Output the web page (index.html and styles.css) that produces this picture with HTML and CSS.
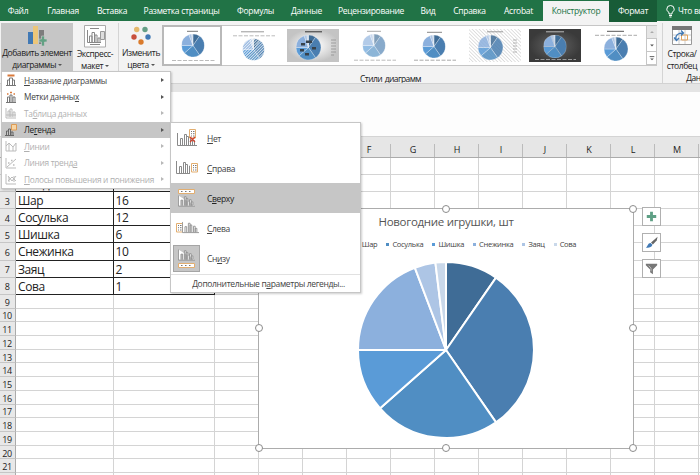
FILE: index.html
```html
<!DOCTYPE html>
<html lang="ru">
<head>
    <meta charset="UTF-8">
    <meta name="viewport" content="width=device-width, initial-scale=1.0">
    <title>Новогодние игрушки</title>
    <link rel="stylesheet" href="styles.css">
</head>
<body>

<!-- Общие рисунки -->
<svg class="defs">
    <symbol id="pie" viewBox="-88 -88 176 176">
        <g stroke="#fff" stroke-width="2" stroke-linejoin="round">
            <path fill="#3f6c96" d="M0 0V-88A88 88 0 0 1 50-72.4Z"/>
            <path fill="#4a7eb0" d="M0 0L50-72.4A88 88 0 0 1 50 72.4Z"/>
            <path fill="#508ec3" d="M0 0L50 72.4A88 88 0 0 1-65.9 58.3Z"/>
            <path fill="#5a9bd7" d="M0 0L-65.9 58.3A88 88 0 0 1-88 0Z"/>
            <path fill="#8cb0dd" d="M0 0H-88A88 88 0 0 1-31.2-82.3Z"/>
            <path fill="#adc5e5" d="M0 0L-31.2-82.3A88 88 0 0 1-10.6-87.4Z"/>
            <path fill="#c9d8ea" d="M0 0L-10.6-87.4A88 88 0 0 1 0-88Z"/>
        </g>
    </symbol>
    <symbol id="bars" viewBox="0 0 20 13">
        <path d="M.5 0V12.5H20M3.500 12V5.500h2V12M7.500 12V1.500h2V12M9.500 12V3.500h2V12M13.500 12V5h2v7M15.500 12V7.500h2V12" fill="#fff" stroke="#8a8a8a"/>
    </symbol>
    <symbol id="legend-v" viewBox="0 0 7 10">
        <path d="M.5.500h6v8.500h-6z" fill="#fff" stroke="#e2ae70"/>
        <path d="M2 2.500h1M2 4.700h1M2 7h1M4 2.500h1.500M4 4.700h1.500M4 7h1.500" stroke="#777"/>
    </symbol>
    <symbol id="legend-h" viewBox="0 0 17 5">
        <path d="M.5.500h16v4H.5z" fill="#fff" stroke="#e2ae70"/>
        <path d="M3 2.500h1.500M7 2.500h1.500M11 2.500h1.500" stroke="#777"/>
    </symbol>
    <pattern id="stripes" width="2" height="2" patternUnits="userSpaceOnUse" patternTransform="rotate(-45)">
        <path d="M0 0H2" stroke="#fff" stroke-width="1.500"/>
    </pattern>
    <pattern id="hatch" width="2.500" height="2.500" patternUnits="userSpaceOnUse" patternTransform="rotate(45)">
        <path d="M0 0H2.500" stroke="#bbb" stroke-width=".9"/>
    </pattern>
    <radialGradient id="silver"><stop offset=".3" stop-color="#f2f2f2"/><stop offset="1" stop-color="#c4c4c4"/></radialGradient>
    <radialGradient id="dark"><stop offset=".2" stop-color="#5c5c5c"/><stop offset="1" stop-color="#3a3a3a"/></radialGradient>
</svg>

<!-- Вкладки -->
<nav class="tabs">
    <span>Файл</span>
    <span>Главная</span>
    <span>Вставка</span>
    <span>Разметка страницы</span>
    <span>Формулы</span>
    <span>Данные</span>
    <span>Рецензирование</span>
    <span>Вид</span>
    <span>Справка</span>
    <span>Acrobat</span>
    <span class="active">Конструктор</span>
    <span class="context">Формат</span>
    <span class="ask"><svg width="9" height="13" viewBox="0 0 9 13" fill="none" stroke="#fff"><path d="M3 9V7.500C1.500 6.500.8 5.500.8 4.200a3.700 3.700 0 0 1 7.400 0C8.200 5.500 7.500 6.500 6 7.500V9zM3 10.500h3M3.500 12h2"/></svg>Что вы</span>
</nav>

<!-- Лента -->
<div class="ribbon">
    <div class="tool tool-add">
        <svg width="20" height="20" viewBox="0 0 20 20"><path d="M1 6h5v12H1z" fill="#4179b5"/><path d="M6 0h5v18H6z" fill="#ecc679"/><path d="M12 4h5v14h-5z" fill="#7d7d7d"/><path d="M14.500 10h3v3H20v3h-2.500v4h-3v-4H12v-3h2.500z" fill="#62a183" stroke="#c6c6c6" stroke-width=".7"/></svg>
        <p>Добавить элемент<br>диаграммы <i class="caret"></i></p>
    </div>
    <div class="tool tool-express">
        <svg width="22" height="23" viewBox="0 0 22 23"><path d="M.5.500h21v21.500H.5z" fill="#fff" stroke="#aaa"/><path d="M6 3.500h9M6 19.500h10" stroke="#888"/><path d="M3.500 5v12.500H17M5.500 17v-6H8v6M8 17V7.500h2.500V17M11 17v-7h2v7M14 17v-4h2v4" fill="none" stroke="#888"/><path d="M16.500 6.500h4v8h-4z" fill="#ddd" stroke="#999"/></svg>
        <p>Экспресс-<br>макет <i class="caret"></i></p>
    </div>
    <div class="tool tool-colors">
        <svg width="20" height="20" viewBox="0 0 20 20"><circle cx="5.700" cy="3.500" r="2.700" fill="#e5b86c"/><circle cx="14" cy="3.500" r="2.700" fill="#659f86"/><circle cx="3" cy="11" r="2.700" fill="#c8503c"/><circle cx="17" cy="11" r="2.700" fill="#4179b5"/><circle cx="10" cy="16" r="2.700" fill="#da7b2c"/></svg>
        <p>Изменить<br>цвета <i class="caret"></i></p>
    </div>
    <div class="styles">
        <div class="gallery">
            <svg class="selected" viewBox="0 0 60 41"><path d="M25 6.300h11" stroke="#777"/><use href="#pie" x="19.500" y="9" width="23" height="23"/><path d="M10 35.500h43" stroke="#bbb" stroke-dasharray="4 1.500"/></svg>
            <svg viewBox="0 0 60 41"><path d="M18 6.800h23" stroke="#999"/><path d="M10 10.800h42" stroke="#bbb" stroke-dasharray="4 1.500"/><use href="#pie" x="19.500" y="13.500" width="22" height="22"/><circle cx="30.500" cy="24.500" r="11.500" fill="url(#stripes)"/></svg>
            <svg viewBox="0 0 60 41"><path d="M4 4h52v33H4z" fill="url(#silver)"/><path d="M22 6.800h17" stroke="#333"/><use href="#pie" x="13" y="10" width="25" height="25"/><g fill="#38424b"><path d="M18 18h4v2.500h-4zM23 15.500h6v2.500h-6zM29 22h4v2.500h-4zM17 24h4v2.500h-4zM22 28h4v2.500h-4z"/></g><path d="M48 15h5M48 18h5M48 21h5M48 24h5M48 27h5M48 30h3" stroke="#888" stroke-width=".7"/></svg>
            <svg viewBox="0 0 60 41"><path d="M23 6.300h14" stroke="#aaa"/><use href="#pie" x="18.500" y="9" width="23" height="23" opacity=".65"/><path d="M10 35.200h42" stroke="#bbb" stroke-dasharray="4 1.500"/></svg>
            <svg viewBox="0 0 60 41"><path d="M23 7.300h15" stroke="#888"/><use href="#pie" x="18.500" y="10" width="23" height="23"/><path d="M10 35.200h42" stroke="#aaa" stroke-dasharray="4 1.500"/></svg>
            <svg viewBox="0 0 60 41"><path d="M4 4h52v33H4z" fill="url(#hatch)"/><path d="M22 6.800h16" stroke="#999"/><use href="#pie" x="13" y="10" width="25" height="25" opacity=".85"/><path d="M48 15h4M48 18h4M48 21h4M48 24h4M48 27h4" stroke="#999" stroke-width=".7"/></svg>
            <svg viewBox="0 0 60 41"><path d="M4 4h52v33H4z" fill="url(#dark)"/><path d="M21 6.800h18" stroke="#bbb"/><use href="#pie" x="18.500" y="10" width="23" height="23"/><path d="M10 34.500h41" stroke="#999" stroke-dasharray="4 1.500"/></svg>
            <svg viewBox="0 0 60 41"><path d="M21 6.300h17" stroke="#555"/><path d="M9 10.300h42" stroke="#aaa" stroke-dasharray="4 1.500"/><use href="#pie" x="18" y="12" width="24" height="24"/></svg>
            <div class="scroll">
                <svg class="off" viewBox="0 0 10 13"><path d="M3 7.500l2-2 2 2z" fill="#aaa"/></svg>
                <svg viewBox="0 0 10 13"><path d="M3 6h4L5 8z" fill="#555"/></svg>
                <svg viewBox="0 0 10 13"><path d="M3 7h4L5 9z" fill="#555"/><path d="M2.500 5h5" stroke="#555"/></svg>
            </div>
        </div>
        <div class="caption">Стили диаграмм</div>
    </div>
    <div class="tool tool-data">
        <svg width="20" height="19" viewBox="0 0 20 19"><path d="M.5.500h19v18H.5z" fill="#fff" stroke="#999"/><path d="M0 0h20v4H0z" fill="#777"/><path d="M1 9h18M1 14h18M7 4v14M13 4v14" stroke="#ccc"/><path d="M9.500 9h6v5h-6z" fill="none" stroke="#e5a45c"/><path d="M4 14c-1-5 2-7 7-7M9 4.500L11.500 7 9 9.500M2 11.500L4.500 14.500 7 12" fill="none" stroke="#4179b5" stroke-width="1.300"/></svg>
        <p>Строка/<br>столбец</p>
        <div class="caption">Дан</div>
    </div>
</div>

<div class="formula-bar"></div>

<!-- Лист: ячейки заполняет скрипт -->
<div class="sheet" id="sheet"></div>

<!-- Диаграмма -->
<div class="chart">
    <h1>Новогодние игрушки, шт</h1>
    <ul class="legend">
        <li class="c2">Шар</li>
        <li class="c3">Сосулька</li>
        <li class="c4">Шишка</li>
        <li class="c5">Снежинка</li>
        <li class="c6">Заяц</li>
        <li class="c7">Сова</li>
    </ul>
    <svg class="pie"><use href="#pie"/></svg>
    <i class="handle n"></i>
    <i class="handle ne"></i>
    <i class="handle e"></i>
    <i class="handle se"></i>
    <i class="handle s"></i>
    <i class="handle sw"></i>
    <i class="handle w"></i>
</div>
<div class="chart-buttons">
    <button><svg viewBox="0 0 18 18"><path d="M7.500 4h3v3.500h3.500v3h-3.500v3.500h-3v-3.500H4v-3h3.500z" fill="#5fa085"/></svg></button>
    <button><svg viewBox="0 0 18 18"><path d="M15.500 3l-1 4-4 4-2-2z" fill="#666"/><path d="M8 9.500l2 2c-1 3-4 3.500-7 3 2-1 2-5 5-5z" fill="#4179b5"/></svg></button>
    <button><svg viewBox="0 0 18 18"><path d="M3 4h12v1.500L10.500 10v5L7.500 13v-3L3 5.500z" fill="#777"/><path d="M6 6l2.500 2.500V12" stroke="#ddd" fill="none" stroke-width=".7"/></svg></button>
</div>

<!-- Меню "Добавить элемент диаграммы" -->
<ul class="menu">
    <li><svg viewBox="0 0 12 12"><path d="M2.500 1.500h7" stroke="#d9793a" stroke-width="2"/><path d="M2.500 11V6h2v5M4.500 11V4h3v7M7.500 11V6h2v5M1 11.500h10" fill="none" stroke="#777"/></svg><span><u>Н</u>азвание диаграммы</span></li>
    <li><svg viewBox="0 0 12 12"><path d="M2 3h1.500M5 1.500h2M8.500 3H10" stroke="#d9793a" stroke-width="1.500"/><path d="M2.500 11V6h2v5M5 11V4h2v7M8 11V6h2v5M1 11.500h10" fill="none" stroke="#777"/></svg><span>Метки данны<u>х</u></span></li>
    <li class="disabled"><svg viewBox="0 0 12 12"><path d="M1 1v10h10M3 10V4h2v6M5 10V2h2v8M8 10V5h2v5M1 8h10" fill="none" stroke="#bbb"/></svg><span>Та<u>б</u>лица данных</span></li>
    <li class="hover"><svg viewBox="0 0 12 12"><path d="M6.500.500h5v5.500h-5z" fill="#f7d5a5" stroke="#dd9b54"/><path d="M1.500 11V7h2v4M3.500 11V5h2v6M6 11V8h2v3M0 11.500h9" fill="none" stroke="#666"/></svg><span>Ле<u>г</u>енда</span></li>
    <li class="disabled"><svg viewBox="0 0 12 12"><path d="M1 1v10h10M1 6l3-3 4 4 3-4M4 3v8M8 7v4M11 3v8" fill="none" stroke="#bbb"/></svg><span><u>Л</u>инии</span></li>
    <li class="disabled"><svg viewBox="0 0 12 12"><path d="M1 1v10h10M2 10l9-8" fill="none" stroke="#bbb"/><path d="M3 6h1.500M6 3.500h1.500M8 8h1.500" stroke="#bbb" stroke-width="1.500"/></svg><span>Линия тренд<u>а</u></span></li>
    <li class="disabled"><svg viewBox="0 0 12 12"><path d="M1 1v10h10M3 3l4 5 4-5M3 8l4-4 4 4M4 4v5M9 3v6" fill="none" stroke="#bbb"/></svg><span><u>П</u>олосы повышения и понижения</span></li>
</ul>

<!-- Подменю "Легенда" -->
<div class="submenu">
    <ul>
        <li><svg viewBox="0 0 27 27"><use href="#bars" x="4" y="8" width="20" height="13"/><use href="#legend-v" x="16" y="4" width="7" height="10"/><path d="M17 12l5 5M22 12l-5 5" stroke="#d0442f" stroke-width="1.300"/></svg><span><u>Н</u>ет</span></li>
        <li><svg viewBox="0 0 27 27"><use href="#bars" x="3" y="6" width="20" height="13"/><path d="M17 6h9v14h-9z" fill="#fff"/><use href="#legend-v" x="18" y="8" width="7" height="10"/></svg><span><u>С</u>права</span></li>
        <li class="hover"><svg viewBox="0 0 27 27"><use href="#legend-h" x="5" y="4" width="17" height="5"/><use href="#bars" x="5" y="10" width="17" height="12"/></svg><span>С<u>в</u>ерху</span></li>
        <li><svg viewBox="0 0 27 27"><use href="#legend-v" x="3" y="8" width="7" height="10"/><use href="#bars" x="9" y="6" width="17" height="13"/></svg><span><u>С</u>лева</span></li>
        <li><svg class="checked" viewBox="0 0 27 27"><use href="#bars" x="5" y="4" width="17" height="12"/><use href="#legend-h" x="5" y="18" width="17" height="5"/></svg><span>Сн<u>и</u>зу</span></li>
    </ul>
    <div class="more">Дополнительные п<u>а</u>раметры легенды...</div>
</div>

<script>
    const columns = ['A', 'B', 'C', 'D', 'E', 'F', 'G', 'H', 'I', 'J', 'K', 'L', 'M', ''];
    const data = {
        2: ['Звезда', 5],
        3: ['Шар', 16],
        4: ['Сосулька', 12],
        5: ['Шишка', 6],
        6: ['Снежинка', 10],
        7: ['Заяц', 2],
        8: ['Сова', 1]
    };
    const sheet = document.getElementById('sheet');

    function addCell(text, className) {
        const cell = document.createElement('div');
        cell.textContent = text;
        cell.className = className;
        sheet.appendChild(cell);
    }

    addCell('', 'head');
    columns.forEach(name => addCell(name, 'head'));

    for (let row = 1; row <= 22; row++) {
        addCell(row < 22 ? row : '', 'row-number');
        columns.forEach((name, i) => {
            const value = data[row] && data[row][i];
            addCell(value || '', value ? 'cell filled' : 'cell');
        });
    }
</script>

</body>
</html>
```
FILE: styles.css
```css
* {
    box-sizing: border-box;
}
body {
    position: relative;
    width: 700px;
    height: 475px;
    margin: 0;
    overflow: hidden;
    background: #fff;
    font-family: "Open Sans", "Noto Sans", sans-serif;
    font-size: 8.5px;
    color: #222;
}
ul {
    list-style: none;
    margin: 0;
    padding: 0;
}
p {
    margin: 0;
}
u {
    text-underline-offset: 1px;
}
.defs {
    position: absolute;
    width: 0;
    height: 0;
}

/* Вкладки */
.tabs {
    display: grid;
    grid-template-columns: 36px 54px 44px 95px 53px 49px 80px 34px 49px 49px 66px 48px 43px;
    height: 21px;
    background: #217346;
    color: #fff;
    font-size: 8.5px;
    letter-spacing: -0.3px;
    line-height: 22px;
    white-space: nowrap;
}
.tabs span {
    text-align: center;
}
.tabs .active {
    margin-top: 1px;
    line-height: 20px;
    background: #f3f3f3;
    color: #217346;
}
.tabs .context {
    background: #185c37;
}
.tabs .ask {
    display: flex;
    align-items: center;
    gap: 3px;
    padding-left: 9px;
    overflow: hidden;
}
.ask svg {
    flex: none;
}

/* Лента */
.ribbon {
    display: flex;
    height: 63px;
    background: #f3f3f3;
    border-bottom: 1px solid #d2d2d2;
    padding: 2px 0 0 1px;
    overflow: hidden;
}
.tool {
    flex: none;
    display: flex;
    flex-direction: column;
    align-items: center;
    padding-top: 3px;
    white-space: nowrap;
    letter-spacing: -0.42px;
}
.tool svg {
    flex: none;
}
.tool p {
    margin-top: auto;
    line-height: 12px;
    text-align: center;
}
.tool-add, .tool-express, .tool-colors {
    height: 48px;
}
.tool-add {
    width: 72px;
    background: #c6c6c6;
}
.tool-express {
    width: 44px;
    padding-top: 2px;
}
.tool-colors {
    width: 45px;
    border-left: 1px solid #d4d4d4;
    margin-left: 1px;
}
.caret {
    display: inline-block;
    border: 2px solid transparent;
    border-top-color: #555;
    border-bottom: 0;
    vertical-align: 2px;
}
.caption {
    text-align: center;
    line-height: 12px;
    letter-spacing: -0.42px;
}
.styles {
    width: 495px;
    margin-left: -1px;
}
.styles .caption {
    padding-right: 38px;
    letter-spacing: -0.6px;
    word-spacing: 1px;
}
.gallery {
    display: grid;
    grid-template-columns: repeat(8, 60.5px) 10px;
    height: 41px;
    margin: 2px 0 7px;
    background: #fff;
    border: 1px solid #c6c6c6;
    border-left: 0;
}
.gallery > svg {
    width: 60px;
    height: 41px;
    margin-top: -1px;
}
.gallery .selected {
    outline: 2px solid #b9b9b9;
    outline-offset: -2px;
}
.scroll {
    display: grid;
    grid-template-rows: repeat(3, 13px);
    border-left: 1px solid #c6c6c6;
}
.scroll svg {
    width: 10px;
    height: 13px;
    border-bottom: 1px solid #c6c6c6;
}
.scroll .off {
    background: #e6e6e6;
}
.tool-data {
    width: 39px;
    border-left: 1px solid #d4d4d4;
    margin-left: 5px;
}
.tool-data p {
    margin-top: 3px;
}
.tool-data .caption {
    padding-left: 23px;
}

.formula-bar {
    height: 53px;
    border-top: 8px solid #e4e4e4;
    background: #fdfdfd;
    border-bottom: 1px solid #d4d4d4;
}

/* Лист */
.sheet {
    display: grid;
    grid-template-columns: 16px 97.5px 101.5px repeat(12, 44px);
    grid-template-rows: 20.700px repeat(8, 17.150px) repeat(14, 13.720px);
    height: 338px;
    overflow: hidden;
}
.head {
    padding-top: 5px;
    background: linear-gradient(#e6e6e6, #e6e6e6) no-repeat 0 0 / 100% 7px, linear-gradient(90deg, #e6e6e6 calc(100% - 1px), #bbb 0);
    border-bottom: 1px solid #ababab;
    font-size: 9px;
    line-height: 16px;
    text-align: center;
}
.row-number {
    display: flex;
    align-items: center;
    justify-content: center;
    background: #e8e8e8;
    border-right: 1px solid #ababab;
    border-bottom: 1px solid #c6c6c6;
    font-size: 9px;
    letter-spacing: -0.5px;
    padding: 2px 1px 0 0;
}
.cell {
    border-right: 1px solid #d4d4d4;
    border-bottom: 1px solid #d4d4d4;
}
.filled {
    border-color: #222;
    padding-left: 2px;
    font-size: 12px;
    letter-spacing: -0.4px;
    line-height: 17px;
    white-space: nowrap;
}

/* Диаграмма лежит поверх листа */
.chart {
    position: absolute;
    left: 258px;
    top: 208px;
    width: 376px;
    height: 241px;
    border: 1.500px solid #acacac;
    background: #fff;
}
.chart h1 {
    margin: 4px 0 0;
    font-size: 11.500px;
    font-weight: normal;
    letter-spacing: -0.3px;
    line-height: 18px;
    text-align: center;
    color: #555;
}
.legend {
    display: flex;
    justify-content: center;
    gap: 9px;
    margin-top: 7px;
    padding-left: 40px;
    font-size: 7.5px;
    letter-spacing: -0.3px;
    line-height: 12px;
    color: #444;
}
.legend li {
    display: flex;
    align-items: center;
    gap: 3px;
}
.legend li::before {
    content: "";
    width: 3px;
    height: 3px;
}
.legend .c2::before { background: #4a7eb0; }
.legend .c3::before { background: #508ec3; }
.legend .c4::before { background: #5a9bd7; }
.legend .c5::before { background: #8cb0dd; }
.legend .c6::before { background: #adc5e5; }
.legend .c7::before { background: #c9d8ea; }
.pie {
    display: block;
    width: 176px;
    height: 176px;
    margin: 12px 100px 0 98.5px;
}
.handle {
    position: absolute;
    width: 8px;
    height: 8px;
    margin: -4px;
    border: 1.500px solid #8c8c8c;
    border-radius: 50%;
    background: #fff;
    left: 0;
    top: 0;
}
.handle.n, .handle.s { left: 187px; }
.handle.ne, .handle.e, .handle.se { left: 374px; }
.handle.e, .handle.w { top: 119px; }
.handle.se, .handle.s, .handle.sw { top: 239px; }
.chart-buttons {
    position: absolute;
    left: 642px;
    top: 207px;
    display: grid;
    gap: 7px;
}
.chart-buttons button {
    display: block;
    width: 19px;
    height: 19px;
    padding: 0;
    border: 1px solid #b0b0b0;
    background: #fff;
}
.chart-buttons svg {
    display: block;
    width: 17px;
    height: 17px;
}

/* Меню */
.menu, .submenu {
    position: absolute;
    background: #fff;
    border: 1px solid #c6c6c6;
    box-shadow: 1px 1px 2px rgba(0, 0, 0, 0.2);
    color: #444;
    white-space: nowrap;
}
.menu {
    left: 1px;
    top: 71px;
    width: 170px;
    height: 118px;
    font-size: 8.300px;
    letter-spacing: -0.28px;
}
.menu li {
    display: flex;
    align-items: center;
    height: 16.500px;
    padding: 0 6px 0 3px;
}
.menu svg {
    flex: none;
    width: 12px;
    height: 12px;
    margin-right: 7px;
}
.menu li::after {
    content: "";
    margin-left: auto;
    border: 2.500px solid transparent;
    border-left: 3px solid #555;
    border-right: 0;
}
.menu .disabled {
    color: #b0b0b0;
}
.menu .disabled::after {
    border-left-color: #b8b8b8;
}
.menu .hover, .submenu .hover {
    background: #c6c6c6;
    color: #222;
}
.submenu {
    left: 170px;
    top: 122px;
    width: 191px;
    height: 171px;
    font-size: 8.500px;
    letter-spacing: -0.35px;
}
.submenu li {
    display: flex;
    align-items: center;
    gap: 7px;
    height: 30px;
    padding-left: 2px;
}
.submenu li svg {
    width: 27px;
    height: 27px;
}
.submenu .checked {
    background: #c6c6c6;
    outline: 1px solid #a5a5a5;
    outline-offset: -1px;
}
.more {
    margin-top: 1px;
    border-top: 1px solid #e1e1e1;
    padding-left: 6px;
    line-height: 17px;
    text-align: center;
}
```
